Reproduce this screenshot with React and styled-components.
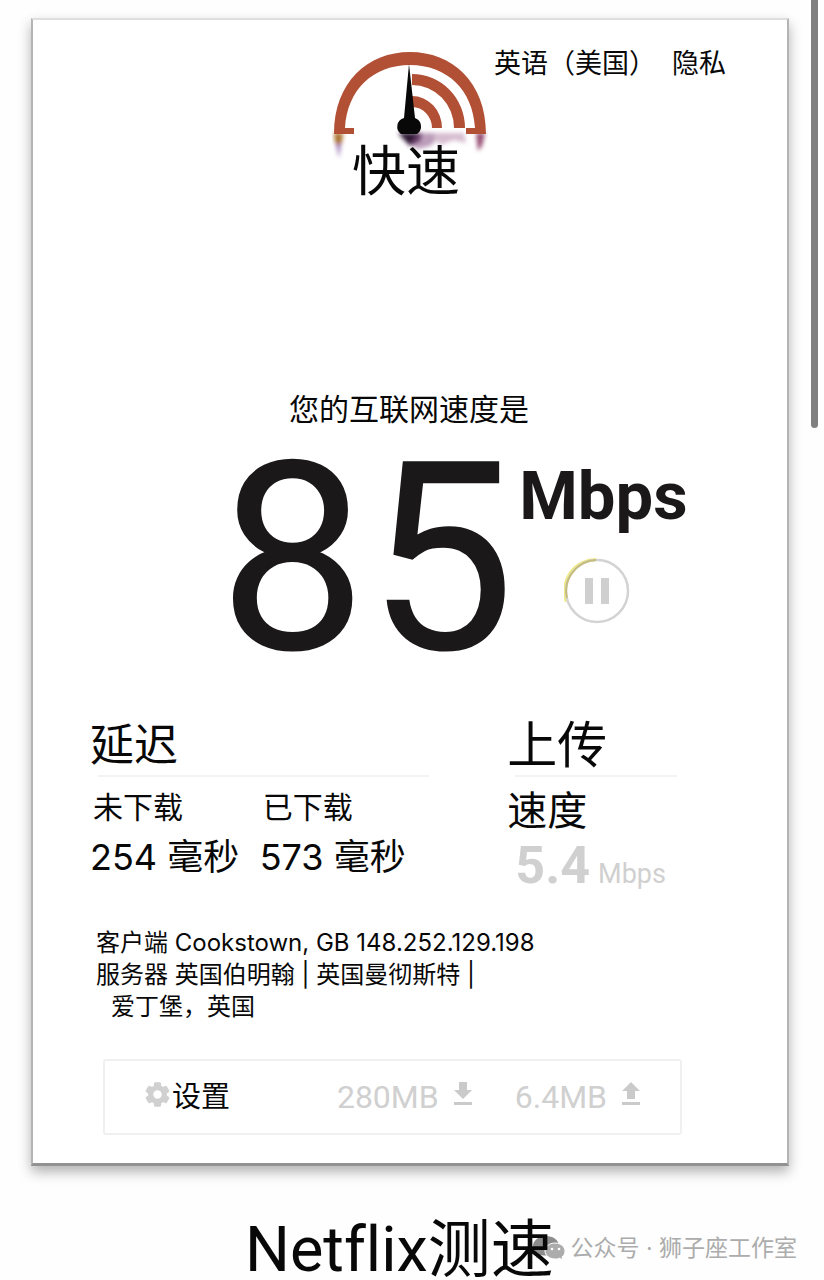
import React, { useState } from 'react';
import styled, { createGlobalStyle } from 'styled-components';

const GlobalStyle = createGlobalStyle`
  * {
    box-sizing: border-box;
  }

  body {
    margin: 0;
    overflow: hidden;
    background-color: #fefefe;
    color: #080808;
    font-family: Inter, 'Noto Sans CJK SC', sans-serif;
  }

  h1, h2, h3, p, dl, dt, dd {
    margin: 0;
    font-weight: 400;
  }
`;

const Page = styled.div`
  position: relative;
  padding: 18px 35px 0 31px;
`;

const ScrollThumb = styled.div`
  position: absolute;
  top: 0;
  right: 6px;
  width: 7px;
  height: 428px;
  border-radius: 0 0 4px 4px;
  background-color: #808080;
`;

const Card = styled.main`
  padding: 30px 110px 28px 57px;
  border: 2px solid #b4b4b4;
  border-top-color: #dedede;
  border-bottom: 3px solid #929292;
  background-color: #fff;
  box-shadow: 0 6px 12px rgba(0, 0, 0, 0.3);
`;

const Header = styled.header`
  display: grid;
  grid-template-columns: 1fr auto 1fr;
  gap: 6px;
  margin: 0 -110px 0 -57px;
`;

const Brand = styled.div`
  grid-column: 2;
  display: flex;
  flex-direction: column;
  align-items: center;
`;

const BrandName = styled.h1`
  margin-top: -20px;
  padding-right: 8px;
  font-size: 54px;
  line-height: 64px;
`;

const Links = styled.nav`
  display: flex;
  gap: 16px;
  font-size: 27px;
  line-height: 28px;
  white-space: nowrap;

  a {
    color: inherit;
    text-decoration: none;
  }
`;

const Result = styled.section`
  margin: 185px -110px 0 -57px;
`;

const Caption = styled.p`
  padding: 0 2px 6px 0;
  font-size: 30px;
  line-height: 40px;
  text-align: center;
`;

const SpeedRow = styled.div`
  display: flex;
  justify-content: center;
  gap: 4px;
  padding-left: 86px;
  color: #1a1819;
  font-family: Roboto, sans-serif;
`;

const SpeedValue = styled.span`
  font-size: 264px;
  line-height: 248px;
`;

const SpeedSide = styled.div`
  display: flex;
  flex-direction: column;
  padding-top: 25px;
`;

const SpeedUnit = styled.span`
  font-size: 67px;
  font-weight: 700;
  line-height: 72px;
`;

const PauseButton = styled.button`
  width: 66px;
  height: 66px;
  margin: 26px 0 0 45px;
  padding: 0;
  border: 0;
  background: none;
  cursor: pointer;

  svg {
    display: block;
  }
`;

const Metrics = styled.div`
  display: grid;
  grid-template-columns: 2fr 1fr;
  gap: 78px;
  margin-top: 34px;
`;

const MetricTitle = styled.h2`
  padding-bottom: 2px;
  font-size: ${(props) => props.$size};
  line-height: 56px;
`;

const Divider = styled.div`
  height: 2px;
  margin-left: 8px;
  background-color: #f3f3f3;
`;

const Readings = styled.dl`
  display: grid;
  grid-template-columns: 1fr 1fr;
  padding-top: 8px;
  white-space: nowrap;
`;

const ReadingLabel = styled.dt`
  padding-left: 3px;
  font-size: 30px;
  line-height: 44px;
`;

const ReadingValue = styled.dd`
  font-size: 36px;
  line-height: 56px;
`;

const UploadLabel = styled.h3`
  padding-top: 7px;
  font-size: 40px;
  line-height: 54px;
`;

const UploadValue = styled.p`
  padding-left: 8px;
  color: #d0d0d0;
  font-family: Roboto, sans-serif;
  font-size: 27px;
  line-height: 56px;
  white-space: nowrap;

  strong {
    margin-right: 8px;
    font-size: 52px;
    font-weight: 700;
  }
`;

const Details = styled.div`
  margin-top: 25px;
  padding-left: 6px;
  font-size: 24px;
  line-height: 32px;
`;

const Indented = styled.p`
  padding-left: 15px;
`;

const Toolbar = styled.div`
  display: flex;
  align-items: center;
  height: 76px;
  margin: 36px -5px 0 13px;
  padding: 0 39px 0 38px;
  border: 2px solid #f0f0f0;
  border-radius: 3px;

  svg {
    margin-bottom: 6px;
  }
`;

const SettingsButton = styled.button`
  display: flex;
  align-items: center;
  margin-right: auto;
  padding: 0;
  border: 0;
  background: none;
  color: inherit;
  font-family: inherit;
  font-size: 29px;
  line-height: 40px;
  cursor: pointer;
`;

const Usage = styled.span`
  display: flex;
  align-items: center;
  gap: 14px;
  margin-left: 42px;
  color: #d0d0d0;
  font-family: Roboto, sans-serif;
  font-size: 32px;
  line-height: 40px;
`;

const Footer = styled.footer`
  position: relative;
  padding: 53px 0 0 214px;
`;

const FooterTitle = styled.h2`
  position: relative;
  z-index: 1;
  font-family: Roboto, 'Noto Sans CJK SC', sans-serif;
  font-size: 63px;
  font-variant-ligatures: none;
  line-height: 62px;
  white-space: nowrap;
`;

const Account = styled.div`
  position: absolute;
  right: -8px;
  bottom: 17px;
  display: flex;
  align-items: center;
  gap: 4px;
  color: #acacac;
  font-size: 23px;
  line-height: 32px;
  white-space: nowrap;
`;

const GaugeLogo = () => (
  <svg width="156" height="110" viewBox="0 0 156 110" aria-hidden="true">
    <defs>
      <filter id="smudge" x="-20%" y="-20%" width="140%" height="140%">
        <feGaussianBlur stdDeviation="2" />
      </filter>
    </defs>
    <g filter="url(#smudge)">
      <path d="M2 83h9l-1 9-3 6-4-6z" fill="#a8702c" />
      <path d="M4 94h5l-2 14z" fill="#9d78b4" />
      <path d="M66 83h24l-2 8-10 5z" fill="#2a1230" />
      <path d="M86 83h16l2 8-6 5-12 3-8-5z" fill="#8f5a8c" opacity="0.6" />
      <path d="M100 83h32l2 10-12-3-14 5z" fill="#c49fbb" opacity="0.7" />
      <path d="M144 83h9l-3 13-4 5z" fill="#944a70" />
    </g>
    <path d="M2 84C2 32 36 2 78 2s76 30 76 82h-20v-6h9C141 40 115 15 78 15S15 40 13 78h9v6z" fill="#b25036" />
    <path d="M80 24a53 54 0 0 1 53 54h-11a42 43 0 0 0-42-43z" fill="#b25036" />
    <path d="M80 46a30 32 0 0 1 30 32h-10a20 21 0 0 0-20-21z" fill="#b25036" />
    <path d="M77 14l6 54a9 9 0 0 1 2 16h-16a9 9 0 0 1 3-16z" fill="#080808" />
  </svg>
);

const PauseIcon = () => (
  <svg width="66" height="66" viewBox="0 0 66 66" fill="none" aria-hidden="true">
    <path d="M2 44A32 32 0 0 1 32 1" stroke="#f0ea86" strokeWidth="2" />
    <circle cx="33" cy="33" r="31" stroke="#d3d3d3" strokeWidth="2.5" />
    <path d="M3 40A31 31 0 0 1 32 2" stroke="#c6bd78" strokeWidth="2" />
    <path d="M21 20h8v26h-8zM37 20h8v26h-8z" fill="#cfcfcf" />
  </svg>
);

const GearIcon = () => (
  <svg width="29" height="29" viewBox="0 0 24 24" fill="#d0d0d0" stroke="#d0d0d0" aria-hidden="true">
    <path d="M19.14 12.94c.04-.3.06-.61.06-.94s-.02-.64-.07-.94l2.03-1.58a.49.49 0 0 0 .12-.61l-1.92-3.32a.49.49 0 0 0-.59-.22l-2.39.96a7 7 0 0 0-1.62-.94l-.36-2.54a.48.48 0 0 0-.48-.41h-3.84a.48.48 0 0 0-.47.41l-.36 2.54a7.3 7.3 0 0 0-1.62.94l-2.39-.96a.48.48 0 0 0-.59.22L2.73 8.87a.48.48 0 0 0 .12.61l2.03 1.58a6 6 0 0 0 0 1.88l-2.03 1.58a.49.49 0 0 0-.12.61l1.92 3.32c.12.22.37.29.59.22l2.39-.96c.5.38 1.03.7 1.62.94l.36 2.54c.05.24.24.41.48.41h3.84c.24 0 .44-.17.47-.41l.36-2.54a7 7 0 0 0 1.62-.94l2.39.96c.22.08.47 0 .59-.22l1.92-3.32a.48.48 0 0 0-.12-.61zM12 16a4 4 0 1 1 0-8 4 4 0 0 1 0 8z" />
  </svg>
);

const TransferIcon = ({ up }) => (
  <svg width="20" height="26" viewBox="0 0 20 26" fill="#cacaca" aria-hidden="true">
    <path d={up ? 'M10 1l9 9h-5v8H6v-8H1z' : 'M6 1h8v8h5l-9 9-9-9h5z'} />
    <path d="M1 21h18v3H1z" />
  </svg>
);

const ChatIcon = () => (
  <svg width="34" height="26" viewBox="0 0 34 26" aria-hidden="true">
    <path d="M14 1C6 1 1 6 1 11c0 4 2 6 4 8l-1 4 5-3c9 2 18-2 18-9 0-6-6-10-13-10z" fill="#8c8c8c" />
    <path d="M23 8c-6 0-10 4-10 8s4 8 10 8c2 0 3 0 4-1l4 2-1-3c2-2 3-3 3-6 0-4-4-8-10-8z" fill="#acacac" stroke="#fff" />
    <circle cx="20" cy="14" r="1.3" fill="#fff" />
    <circle cx="27" cy="14" r="1.3" fill="#fff" />
  </svg>
);

const App = () => {
  const [paused, setPaused] = useState(false);

  return (
    <>
      <GlobalStyle />
      <Page>
        <Card>
          <Header>
            <Brand>
              <GaugeLogo />
              <BrandName>快速</BrandName>
            </Brand>
            <Links>
              <a href="#language">英语（美国）</a>
              <a href="#privacy">隐私</a>
            </Links>
          </Header>

          <Result>
            <Caption>您的互联网速度是</Caption>
            <SpeedRow>
              <SpeedValue>85</SpeedValue>
              <SpeedSide>
                <SpeedUnit>Mbps</SpeedUnit>
                <PauseButton aria-label="暂停" aria-pressed={paused} onClick={() => setPaused(!paused)}>
                  <PauseIcon />
                </PauseButton>
              </SpeedSide>
            </SpeedRow>
          </Result>

          <Metrics>
            <section>
              <MetricTitle $size="44px">延迟</MetricTitle>
              <Divider />
              <Readings>
                <div>
                  <ReadingLabel>未下载</ReadingLabel>
                  <ReadingValue>254 毫秒</ReadingValue>
                </div>
                <div>
                  <ReadingLabel>已下载</ReadingLabel>
                  <ReadingValue>573 毫秒</ReadingValue>
                </div>
              </Readings>
            </section>
            <section>
              <MetricTitle $size="50px">上传</MetricTitle>
              <Divider />
              <UploadLabel>速度</UploadLabel>
              <UploadValue>
                <strong>5.4</strong>
                Mbps
              </UploadValue>
            </section>
          </Metrics>

          <Details>
            <p>客户端 Cookstown, GB 148.252.129.198</p>
            <p>服务器 英国伯明翰 | 英国曼彻斯特 |</p>
            <Indented>爱丁堡，英国</Indented>
          </Details>

          <Toolbar>
            <SettingsButton>
              <GearIcon />
              设置
            </SettingsButton>
            <Usage>
              280MB
              <TransferIcon />
            </Usage>
            <Usage>
              6.4MB
              <TransferIcon up />
            </Usage>
          </Toolbar>
        </Card>

        <Footer>
          <FooterTitle>Netflix测速</FooterTitle>
          <Account>
            <ChatIcon />
            公众号 · 狮子座工作室
          </Account>
        </Footer>
        <ScrollThumb />
      </Page>
    </>
  );
};

export default App;
